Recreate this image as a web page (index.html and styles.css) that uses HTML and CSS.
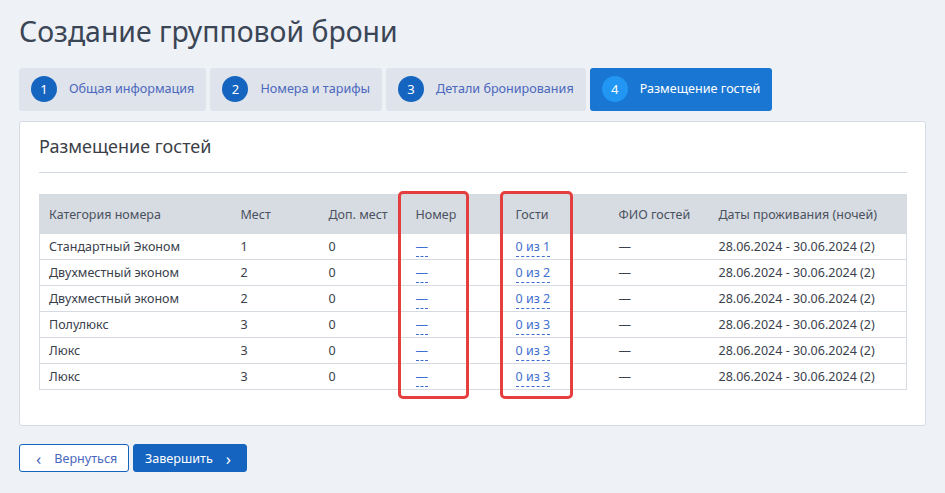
FILE: index.html
```html
<html>
    <head>
        <title>Создание групповой брони</title>
        <link rel="stylesheet" href="styles.css">
    </head>
    <body>
        <h1 class="page-title">Создание групповой брони</h1>

        <div class="steps">
            <div class="step"><span class="step-num">1</span>Общая информация</div>
            <div class="step"><span class="step-num">2</span>Номера и тарифы</div>
            <div class="step"><span class="step-num">3</span>Детали бронирования</div>
            <div class="step active"><span class="step-num">4</span>Размещение гостей</div>
        </div>

        <div class="card">
            <h2 class="card-title">Размещение гостей</h2>

            <div class="table-wrap">
                <table class="guests">
                    <colgroup>
                        <col style="width: 192px">
                        <col style="width: 88px">
                        <col style="width: 87px">
                        <col style="width: 100px">
                        <col style="width: 103px">
                        <col style="width: 100px">
                        <col>
                    </colgroup>
                    <thead>
                        <tr>
                            <th>Категория номера</th>
                            <th>Мест</th>
                            <th>Доп. мест</th>
                            <th>Номер</th>
                            <th>Гости</th>
                            <th>ФИО гостей</th>
                            <th>Даты проживания (ночей)</th>
                        </tr>
                    </thead>
                    <tbody>
                        <tr>
                            <td>Стандартный Эконом</td><td>1</td><td>0</td>
                            <td><a class="dash-link">—</a></td>
                            <td><a class="dash-link">0 из 1</a></td>
                            <td>—</td><td>28.06.2024 - 30.06.2024 (2)</td>
                        </tr>
                        <tr>
                            <td>Двухместный эконом</td><td>2</td><td>0</td>
                            <td><a class="dash-link">—</a></td>
                            <td><a class="dash-link">0 из 2</a></td>
                            <td>—</td><td>28.06.2024 - 30.06.2024 (2)</td>
                        </tr>
                        <tr>
                            <td>Двухместный эконом</td><td>2</td><td>0</td>
                            <td><a class="dash-link">—</a></td>
                            <td><a class="dash-link">0 из 2</a></td>
                            <td>—</td><td>28.06.2024 - 30.06.2024 (2)</td>
                        </tr>
                        <tr>
                            <td>Полулюкс</td><td>3</td><td>0</td>
                            <td><a class="dash-link">—</a></td>
                            <td><a class="dash-link">0 из 3</a></td>
                            <td>—</td><td>28.06.2024 - 30.06.2024 (2)</td>
                        </tr>
                        <tr>
                            <td>Люкс</td><td>3</td><td>0</td>
                            <td><a class="dash-link">—</a></td>
                            <td><a class="dash-link">0 из 3</a></td>
                            <td>—</td><td>28.06.2024 - 30.06.2024 (2)</td>
                        </tr>
                        <tr>
                            <td>Люкс</td><td>3</td><td>0</td>
                            <td><a class="dash-link">—</a></td>
                            <td><a class="dash-link">0 из 3</a></td>
                            <td>—</td><td>28.06.2024 - 30.06.2024 (2)</td>
                        </tr>
                    </tbody>
                </table>

                <!-- highlight frames over the two columns -->
                <div class="mark mark-room"></div>
                <div class="mark mark-guests"></div>
            </div>
        </div>

        <div class="actions">
            <button class="btn btn-back"><span class="chev">&lsaquo;</span>Вернуться</button>
            <button class="btn btn-finish">Завершить<span class="chev">&rsaquo;</span></button>
        </div>
    </body>
</html>
```

FILE: styles.css
```css
body {
    margin: 0;
    padding: 0 19px;
    background-color: #eef1f5;
    font-family: "Noto Sans", "Open Sans", sans-serif;
    font-size: 13px;
    color: #333a45;
}

.page-title {
    margin: 0;
    padding-top: 11px;
    height: 57px;
    font-family: "Noto Sans", "Open Sans", sans-serif;
    font-weight: normal;
    font-size: 28.4px;
    line-height: 40px;
    color: #3a4556;
}

/* Wizard steps */
.steps {
    display: flex;
    gap: 4px;
    height: 43px;
}

.step {
    display: flex;
    align-items: center;
    padding: 0 12px 2px 12px;
    background-color: #dfe3eb;
    border-radius: 3px;
    color: #4a68bd;
    font-size: 12.6px;
}

.step-num {
    display: inline-flex;
    align-items: center;
    justify-content: center;
    width: 26px;
    height: 26px;
    margin-right: 12px;
    border-radius: 50%;
    background-color: #1565c0;
    color: white;
    font-size: 13px;
}

.step.active {
    background-color: #1976d2;
    color: white;
    padding-right: 12px;
}

.step.active .step-num {
    background-color: #2196f3;
}

/* Card */
.card {
    margin-top: 10px;
    background: white;
    border: 1px solid #d6dce5;
    border-radius: 3px;
    padding: 0 18px 35px 19px;
}

.card-title {
    margin: 0;
    padding: 12px 0 14px;
    border-bottom: 1px solid #d3d9e2;
    font-weight: normal;
    font-size: 18px;
    line-height: 24px;
    color: #3a3f48;
}

.table-wrap {
    position: relative;
    margin-top: 21px;
}

.guests {
    width: 100%;
    border-collapse: collapse;
    table-layout: fixed;
    border: 1px solid #d6dbe2;
    font-size: 12.5px;
}

.guests th {
    background-color: #d7dbe2;
    color: #4a5260;
    font-weight: normal;
    text-align: left;
    height: 39px;
    padding: 0 9px;
}

.guests td {
    height: 26px;
    padding: 0 9px;
    border-top: 1px solid #d6dbe2;
    color: #3a414c;
    white-space: nowrap;
}

.dash-link {
    color: #3f6fd0;
    text-decoration: none;
    border-bottom: 1px dashed #3f6fd0;
    padding-bottom: 1px;
}

/* Red highlight frames */
.mark {
    position: absolute;
    top: -3px;
    bottom: -9px;
    border: 3px solid #e53e3e;
    border-radius: 5px;
}

.mark-room {
    left: 359px;
    width: 65px;
}

.mark-guests {
    left: 461px;
    width: 67px;
}

/* Bottom buttons */
.actions {
    display: flex;
    gap: 4px;
    margin-top: 18px;
}

.btn {
    height: 28px;
    border-radius: 3px;
    font-family: "Noto Sans", "Open Sans", sans-serif;
    font-size: 12.6px;
    display: flex;
    align-items: center;
}

.btn-back {
    width: 110px;
    background: white;
    border: 1px solid #1565c0;
    color: #4a68bd;
    padding: 0 0 0 16px;
}

.btn-back .chev {
    margin-right: 13px;
    font-size: 17px;
    line-height: 13px;
}

.btn-finish {
    width: 114px;
    background: #1565c0;
    border: 1px solid #1565c0;
    color: white;
    padding: 0 0 0 11px;
}

.btn-finish .chev {
    margin-left: 13px;
    font-size: 17px;
    line-height: 13px;
}
```
